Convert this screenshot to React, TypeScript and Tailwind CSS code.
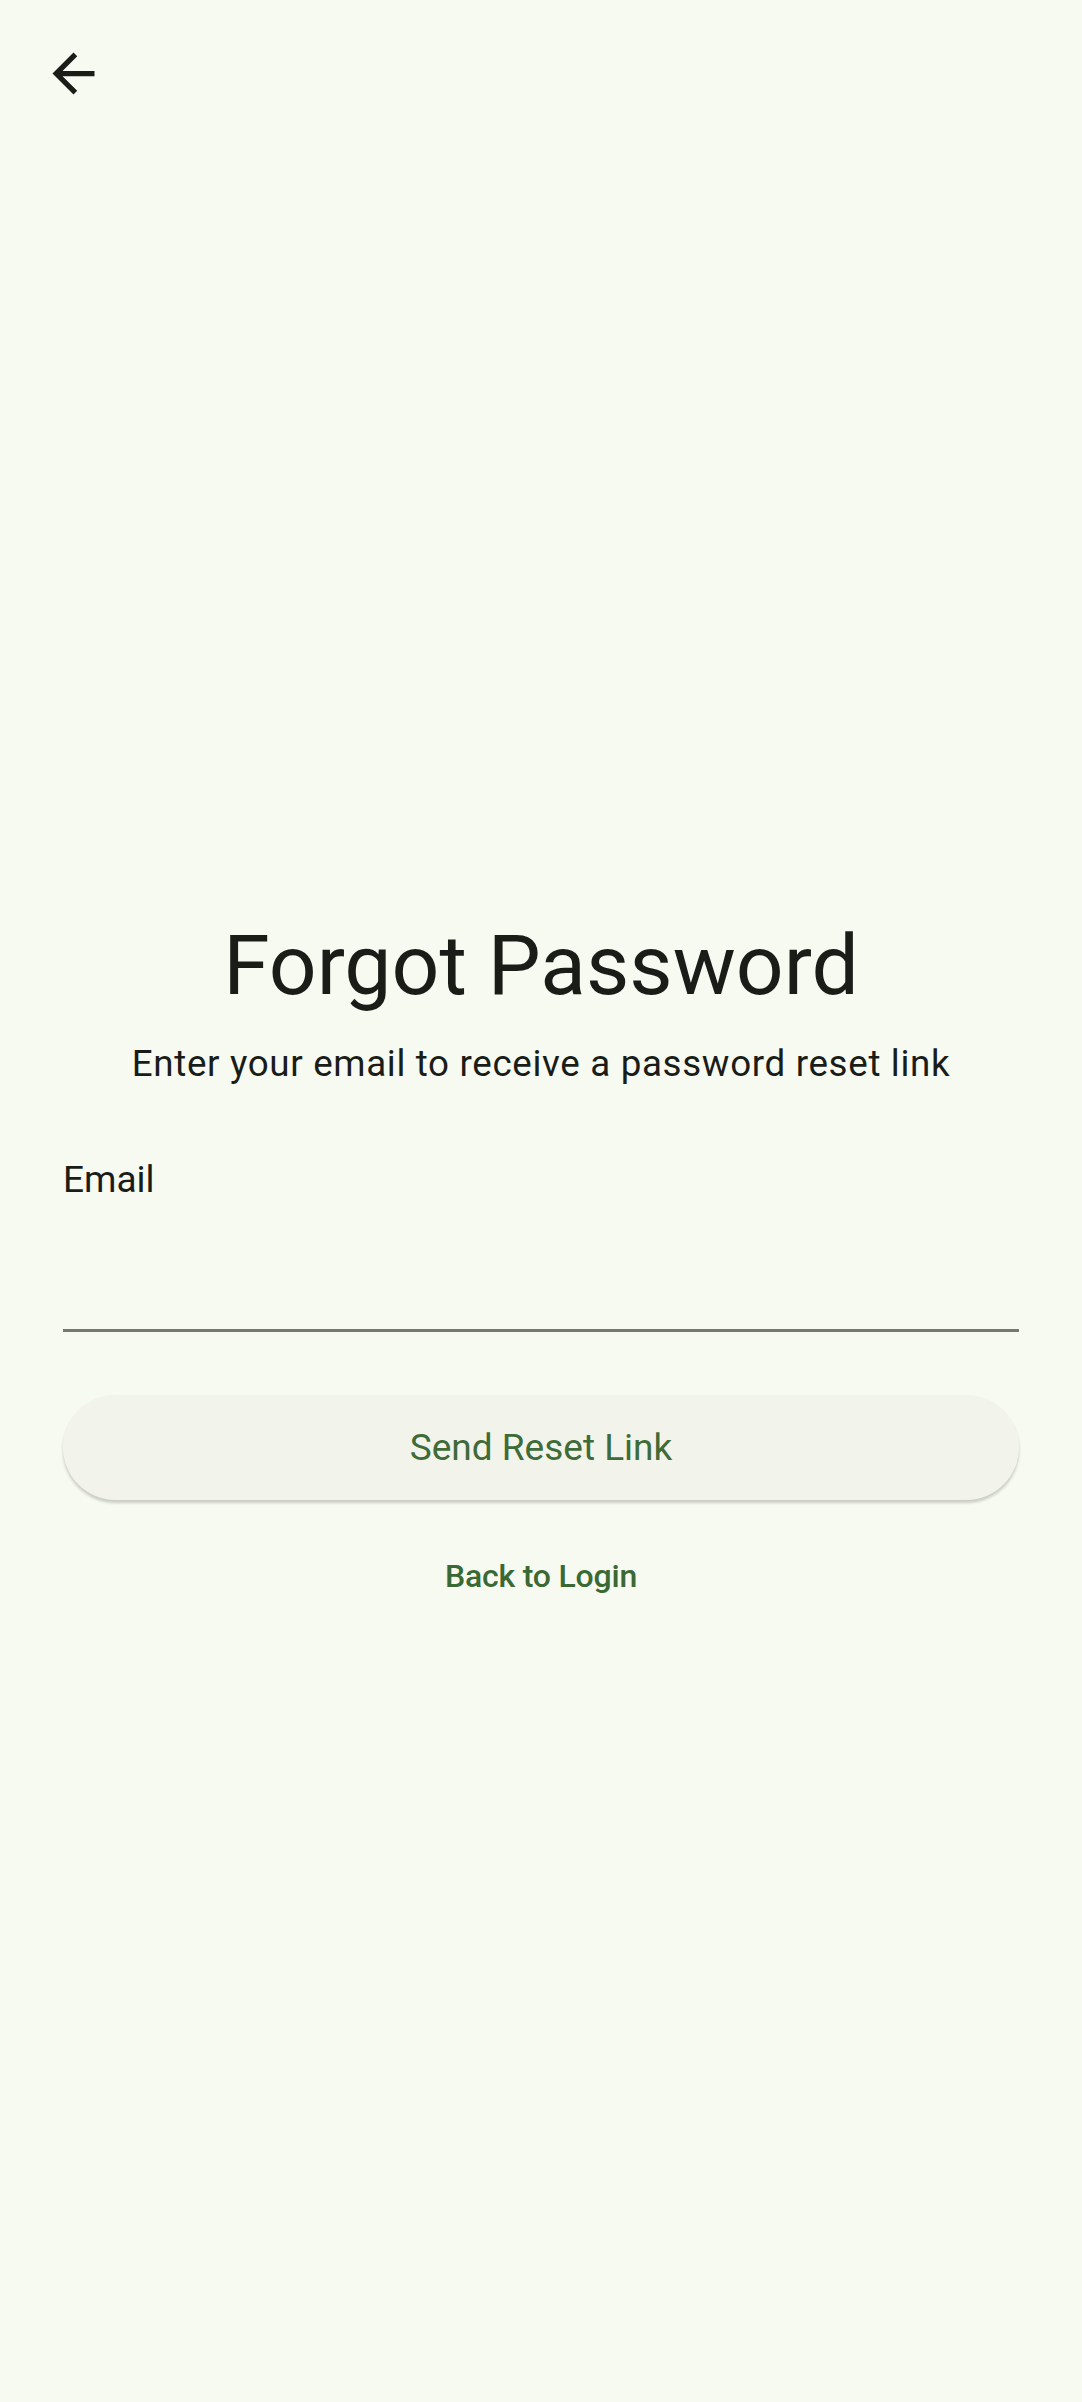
export default function App() {
  return (
    <div
      className="min-h-[2402px] w-full bg-[#f7faf1] text-[#1a1c18]"
      style={{ fontFamily: "Roboto, 'Noto Sans', sans-serif" }}
    >
      <header className="h-[147px] px-[42px] pt-[42px]">
        <button className="w-[63px] h-[63px] flex items-center justify-center" aria-label="Back">
          <svg viewBox="0 0 24 24" className="w-[63px] h-[63px]" fill="#1a1c18">
            <path d="M20 11H7.83l5.59-5.59L12 4l-8 8 8 8 1.41-1.41L7.83 13H20v-2z" />
          </svg>
        </button>
      </header>

      <main className="px-[63px] pt-[769px] flex flex-col">
        <h1 className="text-center text-[84px] leading-[100px] font-normal">Forgot Password</h1>
        <p className="mt-[28px] text-center text-[36.75px] leading-[40px] tracking-[0.66px]">
          Enter your email to receive a password reset link
        </p>

        <label className="mt-[74px] flex flex-col">
          <span className="text-[37px] leading-[44px]">Email</span>
          <input
            type="email"
            className="h-[130px] bg-transparent outline-none border-b-[3px] border-[#757970] text-[37px]"
          />
        </label>

        <button className="mt-[63px] h-[105px] rounded-full bg-[#f2f4eb] text-[#3f6b39] text-[37px] shadow-[0_3px_3px_rgba(0,0,0,0.18)] flex items-center justify-center">
          Send Reset Link
        </button>

        <a className="mt-[56px] self-center text-[32px] leading-[40px] font-medium tracking-[-0.2px] text-[#3b6934]">
          Back to Login
        </a>
      </main>
    </div>
  );
}
